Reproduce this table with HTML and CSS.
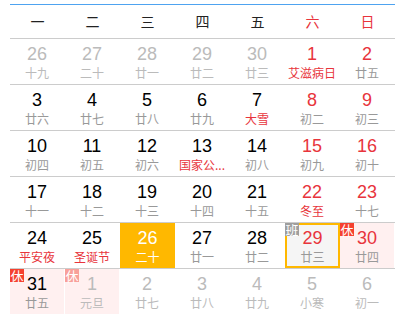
FILE: index.html
```html
<!DOCTYPE html>
<html lang="zh-CN">
<head>
<meta charset="utf-8">
<link rel="stylesheet" href="styles.css">
</head>
<body>
<div class="calendar">
  <div class="weekdays">
    <div>一</div><div>二</div><div>三</div><div>四</div><div>五</div><div class="we">六</div><div class="we">日</div>
  </div>
  <div class="week">
    <div class="day other"><span class="num">26</span><span class="lunar">十九</span></div>
    <div class="day other"><span class="num">27</span><span class="lunar">二十</span></div>
    <div class="day other"><span class="num">28</span><span class="lunar">廿一</span></div>
    <div class="day other"><span class="num">29</span><span class="lunar">廿二</span></div>
    <div class="day other"><span class="num">30</span><span class="lunar">廿三</span></div>
    <div class="day weekend"><span class="num">1</span><span class="lunar fest">艾滋病日</span></div>
    <div class="day weekend"><span class="num">2</span><span class="lunar">廿五</span></div>
  </div>
  <div class="week">
    <div class="day"><span class="num">3</span><span class="lunar">廿六</span></div>
    <div class="day"><span class="num">4</span><span class="lunar">廿七</span></div>
    <div class="day"><span class="num">5</span><span class="lunar">廿八</span></div>
    <div class="day"><span class="num">6</span><span class="lunar">廿九</span></div>
    <div class="day"><span class="num">7</span><span class="lunar fest">大雪</span></div>
    <div class="day weekend"><span class="num">8</span><span class="lunar">初二</span></div>
    <div class="day weekend"><span class="num">9</span><span class="lunar">初三</span></div>
  </div>
  <div class="week">
    <div class="day"><span class="num">10</span><span class="lunar">初四</span></div>
    <div class="day"><span class="num">11</span><span class="lunar">初五</span></div>
    <div class="day"><span class="num">12</span><span class="lunar">初六</span></div>
    <div class="day"><span class="num">13</span><span class="lunar fest">国家公...</span></div>
    <div class="day"><span class="num">14</span><span class="lunar">初八</span></div>
    <div class="day weekend"><span class="num">15</span><span class="lunar">初九</span></div>
    <div class="day weekend"><span class="num">16</span><span class="lunar">初十</span></div>
  </div>
  <div class="week">
    <div class="day"><span class="num">17</span><span class="lunar">十一</span></div>
    <div class="day"><span class="num">18</span><span class="lunar">十二</span></div>
    <div class="day"><span class="num">19</span><span class="lunar">十三</span></div>
    <div class="day"><span class="num">20</span><span class="lunar">十四</span></div>
    <div class="day"><span class="num">21</span><span class="lunar">十五</span></div>
    <div class="day weekend"><span class="num">22</span><span class="lunar fest">冬至</span></div>
    <div class="day weekend"><span class="num">23</span><span class="lunar">十七</span></div>
  </div>
  <div class="week">
    <div class="day"><span class="num">24</span><span class="lunar fest">平安夜</span></div>
    <div class="day"><span class="num">25</span><span class="lunar fest">圣诞节</span></div>
    <div class="day today"><span class="num">26</span><span class="lunar">二十</span></div>
    <div class="day"><span class="num">27</span><span class="lunar">廿一</span></div>
    <div class="day"><span class="num">28</span><span class="lunar">廿二</span></div>
    <div class="day weekend selected"><span class="badge work">班</span><span class="num">29</span><span class="lunar">廿三</span></div>
    <div class="day weekend rest"><span class="badge">休</span><span class="num">30</span><span class="lunar">廿四</span></div>
  </div>
  <div class="week last">
    <div class="day rest"><span class="badge">休</span><span class="num">31</span><span class="lunar">廿五</span></div>
    <div class="day other rest faded"><span class="badge">休</span><span class="num">1</span><span class="lunar">元旦</span></div>
    <div class="day other"><span class="num">2</span><span class="lunar">廿七</span></div>
    <div class="day other"><span class="num">3</span><span class="lunar">廿八</span></div>
    <div class="day other"><span class="num">4</span><span class="lunar">廿九</span></div>
    <div class="day other"><span class="num">5</span><span class="lunar">小寒</span></div>
    <div class="day other"><span class="num">6</span><span class="lunar">初一</span></div>
  </div>
</div>
</body>
</html>
```
FILE: styles.css
```css
html, body {
  margin: 0;
  padding: 0;
  background: #fff;
}
body {
  font-family: "Liberation Sans", Arial, "Noto Sans CJK SC", sans-serif;
}
.calendar {
  width: 385px;
  margin: 4px 10px 0;
  border-top: 1px solid #4ea3f0;
}
.weekdays {
  display: grid;
  grid-template-columns: repeat(7, 55px);
  height: 33px;
  border-bottom: 1px solid #cccccc;
  font-family: "Noto Sans CJK SC", sans-serif;
  font-size: 14px;
  line-height: 33px;
  text-align: center;
  color: #222;
}
.weekdays .we {
  color: #e8343c;
}
.week {
  display: grid;
  grid-template-columns: repeat(7, 55px);
  height: 45px;
  border-bottom: 1px solid #cccccc;
}
.week.last {
  border-bottom: none;
}
.day {
  position: relative;
  display: flex;
  flex-direction: column;
  align-items: center;
  padding-top: 5px;
  box-sizing: border-box;
  height: 45px;
  border-right: 1px solid transparent;
  background-clip: padding-box;
}
.num {
  font-size: 18px;
  line-height: 20px;
  color: #000;
}
.lunar {
  margin-top: 2px;
  font-family: "Noto Sans CJK SC", sans-serif;
  font-size: 12px;
  line-height: 14px;
  color: #999;
  white-space: nowrap;
}
.lunar.fest {
  color: #e8343c;
}
.weekend .num {
  color: #e8343c;
}
.other .num {
  color: #bbbbbb;
}
.other .lunar {
  color: #bbbbbb;
}
.today {
  background: #ffb800;
  border-right: none;
}
.today .num,
.today .lunar {
  color: #fff;
}
.selected {
  background: #f5f5f5;
  border: 2px solid #ffb800;
  padding-top: 3px;
}
.rest {
  background-color: #fff0f0;
}
.badge {
  position: absolute;
  top: 0;
  left: 0;
  width: 14px;
  height: 13px;
  background: #f5412f;
  color: #fff;
  font-family: "Noto Sans CJK SC", sans-serif;
  font-size: 13px;
  line-height: 13px;
  text-align: center;
}
.selected .badge {
  top: -2px;
  left: -2px;
}
.badge.work {
  background: #9e9e9e;
}
.faded .badge {
  background: #f8a09a;
}
```
